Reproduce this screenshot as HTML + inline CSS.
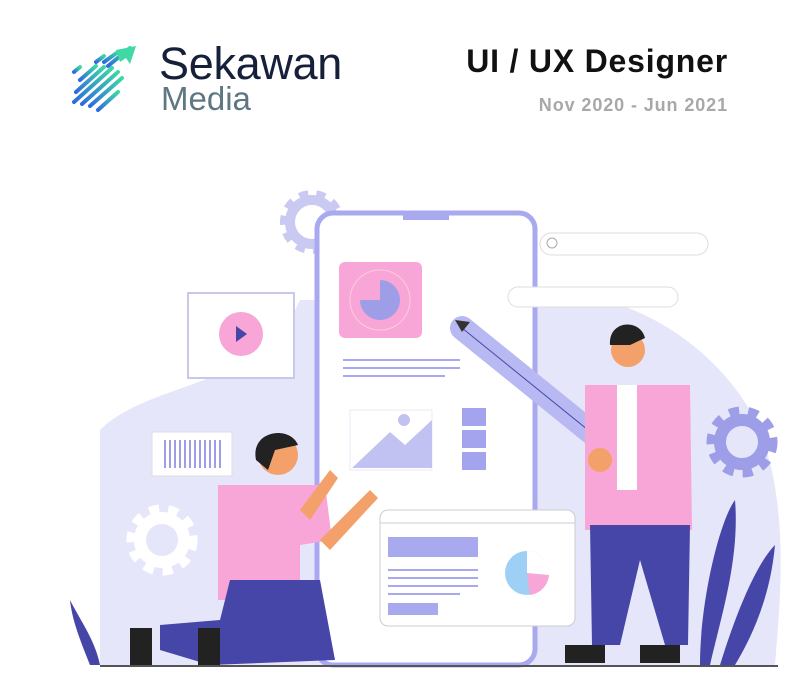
<!DOCTYPE html>
<html><head><meta charset="utf-8"><style>
html,body{margin:0;padding:0;background:#fff;width:800px;height:700px;overflow:hidden;font-family:"Liberation Sans",sans-serif}
.t1{position:absolute;right:72px;top:43px;font-size:32px;font-weight:bold;color:#111;letter-spacing:0.8px}
.t2{position:absolute;right:72px;top:95px;font-size:18px;font-weight:bold;color:#a8a8a8;letter-spacing:0.9px}
.s{position:absolute;left:159px;top:38px;font-size:45px;color:#17203a;letter-spacing:-0.3px}
.m{position:absolute;left:161px;top:80px;font-size:33px;color:#5e7782}
</style></head><body>
<svg style="position:absolute;left:0;top:0" width="800" height="700">
<defs><linearGradient id="g" x1="0" y1="1" x2="1" y2="0"><stop offset="0" stop-color="#2f6be0"/><stop offset="1" stop-color="#3ed9a5"/></linearGradient></defs>
<g stroke="url(#g)" stroke-width="4" stroke-linecap="round">
<line x1="74" y1="72" x2="80" y2="67"/><line x1="80" y1="80" x2="96" y2="66"/><line x1="76" y1="92" x2="104" y2="67"/>
<line x1="74" y1="102" x2="112" y2="68"/><line x1="82" y1="104" x2="118" y2="72"/><line x1="90" y1="106" x2="122" y2="78"/>
<line x1="96" y1="62" x2="104" y2="56"/><line x1="104" y1="62" x2="118" y2="52"/><line x1="98" y1="110" x2="118" y2="92"/>
<line x1="108" y1="66" x2="130" y2="48"/>
</g>
<polygon points="116,50 136,46 130,64 126,58 120,62 118,56" fill="#3ed9a5"/>
<path d="M100 430 C150 380 260 390 300 300 L540 300 C610 280 720 340 760 430 C790 510 780 600 775 665 L100 665 Z" fill="#e6e6fa"/>
<circle cx="312" cy="222" r="22" fill="none" stroke="#c9c9f2" stroke-width="10"/><circle cx="312" cy="222" r="28" fill="none" stroke="#c9c9f2" stroke-width="8" stroke-dasharray="9 8"/>
<circle cx="742" cy="442" r="22" fill="none" stroke="#9d9de8" stroke-width="12"/><circle cx="742" cy="442" r="31" fill="none" stroke="#9d9de8" stroke-width="9" stroke-dasharray="10 9"/>
<circle cx="162" cy="540" r="22" fill="none" stroke="#fff" stroke-width="12"/><circle cx="162" cy="540" r="31" fill="none" stroke="#fff" stroke-width="9" stroke-dasharray="10 9"/>
<rect x="317" y="213" width="218" height="452" rx="16" fill="#fff" stroke="#a9a9f0" stroke-width="5"/>
<rect x="403" y="213" width="46" height="7" fill="#a9a9f0"/>
<rect x="540" y="233" width="168" height="22" rx="11" fill="#fff" stroke="#ddd"/>
<circle cx="552" cy="243" r="5" fill="none" stroke="#aaa"/>
<rect x="508" y="287" width="170" height="20" rx="10" fill="#fff" stroke="#ddd"/>
<rect x="188" y="293" width="106" height="85" fill="#fff" stroke="#c8c8ea" stroke-width="2"/>
<circle cx="241" cy="334" r="22" fill="#f7a6d7"/><polygon points="236,326 236,342 247,334" fill="#4646a8"/>
<rect x="339" y="262" width="83" height="76" rx="6" fill="#f7a6d7"/>
<circle cx="380" cy="300" r="30" fill="none" stroke="#fcd" stroke-width="1"/>
<path d="M380 300 L380 280 A20 20 0 1 1 360 300 Z" fill="#9d9de8"/>
<g stroke="#a9a9f0" stroke-width="2"><line x1="343" y1="360" x2="460" y2="360"/><line x1="343" y1="368" x2="460" y2="368"/><line x1="343" y1="376" x2="445" y2="376"/></g>
<rect x="350" y="410" width="82" height="60" fill="#fff" stroke="#e8e8f5"/>
<polygon points="352,468 390,432 405,445 432,420 432,468" fill="#c2c2f2"/><circle cx="404" cy="420" r="6" fill="#c2c2f2"/>
<g fill="#a3a3ee"><rect x="462" y="408" width="24" height="18"/><rect x="462" y="430" width="24" height="18"/><rect x="462" y="452" width="24" height="18"/></g>
<rect x="152" y="432" width="80" height="44" fill="#fff" stroke="#ddd"/>
<g stroke="#9d9de8" stroke-width="2"><path d="M165 440v28M170 440v28M175 440v28M180 440v28M185 440v28M190 440v28M195 440v28M200 440v28M205 440v28M210 440v28M215 440v28M220 440v28"/></g>
<rect x="380" y="510" width="195" height="116" rx="8" fill="#fff" stroke="#ccc"/>
<line x1="380" y1="523" x2="575" y2="523" stroke="#ccc"/>
<rect x="388" y="537" width="90" height="20" fill="#a9a9f0"/>
<g stroke="#a9a9f0" stroke-width="2"><line x1="388" y1="570" x2="478" y2="570"/><line x1="388" y1="578" x2="478" y2="578"/><line x1="388" y1="586" x2="478" y2="586"/><line x1="388" y1="594" x2="460" y2="594"/></g>
<rect x="388" y="603" width="50" height="12" fill="#a9a9f0"/>
<circle cx="527" cy="573" r="22" fill="#9ed0f5"/><path d="M527 573 L549 575 A22 22 0 0 1 530 595Z" fill="#f7a6d7"/><path d="M527 573 L527 551 A22 22 0 0 1 549 575Z" fill="#fff"/>
<path d="M700 665 C700 600 720 520 735 500 C740 560 720 620 710 665Z" fill="#4646a8"/>
<path d="M720 665 C740 600 760 560 775 545 C770 600 750 640 735 665Z" fill="#4646a8"/>
<path d="M70 600 C80 620 95 640 100 665 L90 665 C80 640 72 620 70 600Z" fill="#4646a8"/>
<line x1="462" y1="328" x2="635" y2="468" stroke="#b8b8f2" stroke-width="24" stroke-linecap="round"/>
<line x1="462" y1="328" x2="635" y2="468" stroke="#4646a8" stroke-width="1"/>
<polygon points="455,320 470,322 462,332" fill="#333"/>
<path d="M585 385 L690 385 L692 530 L585 530 Z" fill="#f7a6d7"/><rect x="617" y="385" width="20" height="105" fill="#fff"/>
<path d="M590 525 L690 525 L688 645 L665 645 L640 560 L620 645 L592 645 Z" fill="#4646a8"/>
<circle cx="628" cy="350" r="17" fill="#f4a06a"/><path d="M610 345 C608 320 640 318 645 338 L630 345Z" fill="#222"/>
<path d="M565 645 h40 v18 h-40Z M640 645 h40 v18 h-40Z" fill="#222"/>
<circle cx="600" cy="460" r="12" fill="#f4a06a"/>
<path d="M218 485 L325 485 L332 540 L300 545 L300 600 L218 600 Z" fill="#f7a6d7"/>
<path d="M160 625 L220 620 L230 580 L320 580 L335 660 L210 665 L160 650Z" fill="#4646a8"/>
<circle cx="278" cy="455" r="20" fill="#f4a06a"/><path d="M256 460 C250 430 290 425 298 445 L275 450 L268 470Z" fill="#222"/>
<path d="M300 510 L330 470 L338 478 L310 520Z M320 540 L370 490 L378 498 L330 550Z" fill="#f4a06a"/>
<path d="M130 628 h22 v38 h-22Z M198 628 h22 v38 h-22Z" fill="#222"/>
<line x1="100" y1="666" x2="778" y2="666" stroke="#555" stroke-width="2"/>
</svg>
<div class="s">Sekawan</div><div class="m">Media</div>
<div class="t1">UI / UX Designer</div><div class="t2">Nov 2020 - Jun 2021</div>
</body></html>
